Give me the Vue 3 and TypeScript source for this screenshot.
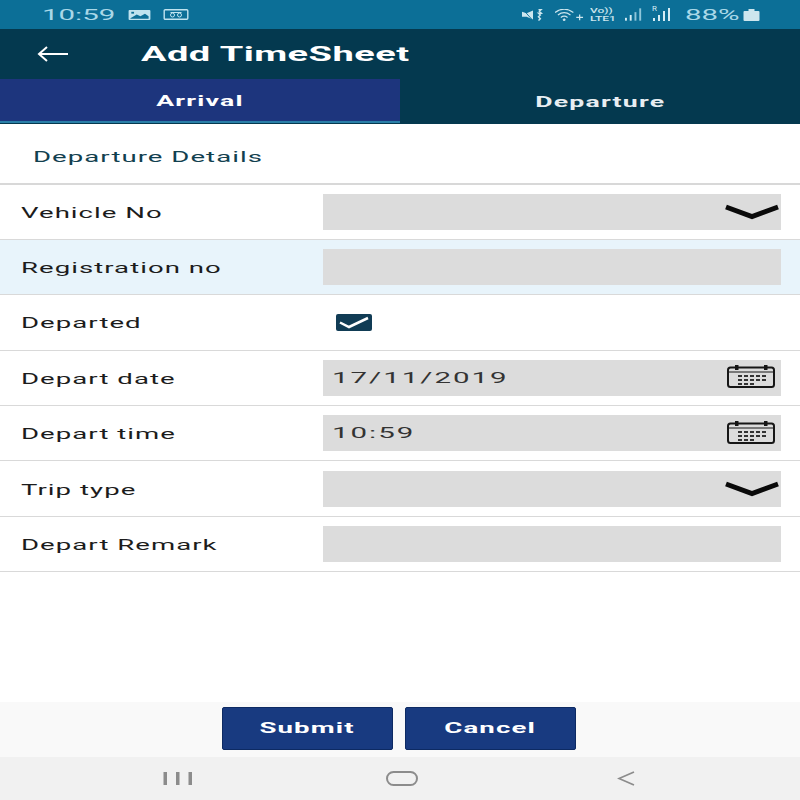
<script setup lang="ts">
interface Row {
  label: string
  value?: string
  kind: 'select' | 'text' | 'check' | 'date'
  tint?: boolean
}
const rows: Row[] = [
  { label: 'Vehicle No', kind: 'select' },
  { label: 'Registration no', kind: 'text', tint: true },
  { label: 'Departed', kind: 'check' },
  { label: 'Depart date', kind: 'date', value: '17/11/2019' },
  { label: 'Depart time', kind: 'date', value: '10:59' },
  { label: 'Trip type', kind: 'select' },
  { label: 'Depart Remark', kind: 'text' },
]
const dots = [
  [11, 10], [17, 10], [23, 10], [29, 10], [35, 10],
  [11, 14], [17, 14], [23, 14], [29, 14], [35, 14],
  [11, 18], [17, 18], [23, 18],
]
</script>

<template>
  <div class="screen">
    <div class="status">
      <div class="status-left">
        <span class="time wide">10:59</span>
        <svg class="ic" width="23" height="10" viewBox="0 0 24 11">
          <rect width="24" height="11" rx="1" fill="#bfe3ef" />
          <path d="M2 9 9 5l4 2 5-3 4 3v2.500H2Z" fill="#0c6f97" />
          <rect x="3" y="2" width="3" height="2" fill="#0c6f97" />
        </svg>
        <svg class="ic" width="26" height="11" viewBox="0 0 25 11" fill="none" stroke="#bfe3ef">
          <rect x="0.700" y="0.700" width="23.600" height="9.600" rx="1" stroke-width="1.400" />
          <circle cx="9" cy="6" r="2" stroke-width="1" />
          <circle cx="16" cy="6" r="2" stroke-width="1" />
          <path d="M7 3.500h11" stroke-width="1" />
        </svg>
      </div>
      <div class="status-right">
        <svg width="22" height="12" viewBox="0 0 24 12" fill="#cde6ee">
          <path d="M0 2.500 5 4 12 1v10L5 8H0Z" />
          <path d="M2 1l9 10" stroke="#0c6f97" stroke-width="1" />
          <path d="M18 0h3l-2 2 2 2h-3l2 2-2 2 2 2-2 2" fill="none" stroke="#cde6ee" stroke-width="1.600" />
        </svg>
        <svg class="wifi" width="29" height="12" viewBox="0 0 30 12" fill="none" stroke="#cde6ee">
          <path d="M0 3.500c6-4.500 13-4.500 19 0M3 6c4-3 9-3 13 0M6 8.500c2-1.500 5-1.500 7 0" stroke-width="1.200" />
          <circle cx="9.500" cy="11" r="1" fill="#cde6ee" />
          <path d="M22 8.500h7M25.500 5.500v6" stroke-width="1.300" />
        </svg>
        <span class="volte"><span class="wide">Vo))</span><span class="wide">LTE1</span></span>
        <svg class="bars" width="19" height="13" viewBox="0 0 20 13" fill="#8fc6da">
          <rect x="0" y="10" width="2" height="3" fill="#d5edf5" />
          <rect x="5" y="7" width="2" height="6" fill="#d5edf5" />
          <rect x="10" y="4" width="2" height="9" />
          <rect x="15" y="0" width="2" height="13" />
        </svg>
        <span class="r-wrap">
          <span class="r">R</span>
          <svg width="22" height="13" viewBox="0 0 20 13" fill="#d5edf5">
            <rect x="0" y="10" width="2" height="3" />
            <rect x="5" y="7" width="2" height="6" />
            <rect x="10" y="3" width="2" height="10" />
            <rect x="15" y="0" width="2" height="13" />
          </svg>
        </span>
        <span class="pct wide">88%</span>
        <svg class="batt" width="17" height="12" viewBox="0 0 16 12" fill="#cde6ee">
          <rect x="0" y="2" width="16" height="10" rx="1" />
          <rect x="5" y="0" width="6" height="2" />
        </svg>
      </div>
    </div>

    <header class="header">
      <svg width="34" height="20" viewBox="0 0 34 20" fill="none" stroke="#fff" stroke-width="2">
        <path d="M3 10h29M11 3 3 10l8 7" />
      </svg>
      <h1 class="title wide">Add TimeSheet</h1>
    </header>

    <nav class="tabs">
      <div class="tab active"><span class="wide">Arrival</span></div>
      <div class="tab"><span class="wide">Departure</span></div>
    </nav>

    <div class="section"><span class="wide">Departure Details</span></div>

    <div v-for="row in rows" :key="row.label" class="row" :class="{ tint: row.tint }">
      <label class="label wide">{{ row.label }}</label>
      <div v-if="row.kind === 'check'" class="check-wrap">
        <svg width="36" height="17" viewBox="0 0 36 17">
          <rect width="36" height="17" rx="2" fill="#113c55" />
          <path d="M4 8.500l9 4.500 19-9" fill="none" stroke="#fff" stroke-width="2.500" />
        </svg>
      </div>
      <div v-else class="field">
        <span class="value wide">{{ row.value }}</span>
        <svg v-if="row.kind === 'select'" class="chev" width="54" height="16" viewBox="0 0 54 16" fill="none" stroke="#0a0a0a" stroke-width="5">
          <path d="M1 3l26 9.500L53 3" />
        </svg>
        <svg v-if="row.kind === 'date'" class="cal" width="48" height="23" viewBox="0 0 48 23">
          <rect x="1" y="2.500" width="46" height="19.500" rx="2.500" fill="none" stroke="#161616" stroke-width="2" />
          <path d="M1 7h46" stroke="#161616" stroke-width="1.200" />
          <rect x="8" y="0" width="3.500" height="5" fill="#161616" />
          <rect x="37" y="0" width="3.500" height="5" fill="#161616" />
          <rect v-for="d in dots" :key="d.join()" :x="d[0]" :y="d[1]" width="4" height="2" fill="#333" />
        </svg>
      </div>
    </div>

    <div class="spacer"></div>

    <div class="actions">
      <button class="btn" type="button"><span class="wide">Submit</span></button>
      <button class="btn" type="button"><span class="wide">Cancel</span></button>
    </div>

    <div class="navbar">
      <svg width="30" height="13" viewBox="0 0 30 13" fill="#8c8c8c">
        <rect x="0.500" y="0" width="3.500" height="13" />
        <rect x="13" y="0" width="3.500" height="13" />
        <rect x="25.500" y="0" width="3.500" height="13" />
      </svg>
      <svg class="home" width="32" height="15" viewBox="0 0 32 15" fill="none" stroke="#8c8c8c" stroke-width="2">
        <rect x="1" y="1" width="30" height="13" rx="6.500" />
      </svg>
      <svg width="18" height="15" viewBox="0 0 18 15" fill="none" stroke="#8c8c8c" stroke-width="1.800">
        <path d="M17 1 2 7.500 17 14" />
      </svg>
    </div>
  </div>
</template>

<style scoped>
.screen {
  width: 800px;
  height: 800px;
  display: flex;
  flex-direction: column;
  background: #fff;
  overflow: hidden;
  font-family: Roboto, "Liberation Sans", sans-serif;
  color: #222;
}
.wide {
  display: inline-block;
  white-space: nowrap;
  letter-spacing: 0.550px;
  transform: scaleX(1.9);
  transform-origin: left center;
}
.status {
  height: 29px;
  flex: none;
  box-sizing: border-box;
  padding: 0 40px 0 42px;
  display: flex;
  align-items: center;
  justify-content: space-between;
  background: #0c6f97;
  color: #a9d8e8;
}
.status-left,
.status-right {
  display: flex;
  align-items: center;
}
.time {
  width: 86px;
  padding-top: 1px;
  font-size: 15.500px;
  letter-spacing: 0;
}
.ic {
  margin-right: 12px;
}
.wifi {
  margin-left: 11px;
}
.volte {
  width: 27px;
  margin-left: 6px;
  display: flex;
  flex-direction: column;
  align-items: flex-start;
  font-size: 8px;
  line-height: 8px;
  color: #cde6ee;
  font-weight: 500;
}
.volte .wide {
  letter-spacing: 0;
  transform: scaleX(1.5);
}
.bars {
  margin-left: 8px;
}
.r-wrap {
  position: relative;
  display: flex;
  margin-left: 8px;
}
.r {
  position: absolute;
  left: 0;
  top: -3px;
  font-size: 8px;
  line-height: 8px;
  color: #d5edf5;
}
.pct {
  width: 52px;
  margin-left: 11px;
  padding-top: 1px;
  font-size: 15.500px;
  letter-spacing: 0;
}
.batt {
  margin-left: 6px;
}
.header {
  height: 50px;
  flex: none;
  box-sizing: border-box;
  padding: 0 0 0 36px;
  display: flex;
  align-items: center;
  background: #04394f;
}
.title {
  margin: 0 0 0 71px;
  font-size: 20px;
  font-weight: 700;
  color: #fff;
  letter-spacing: 0.250px;
}
.tabs {
  height: 45px;
  flex: none;
  display: flex;
  background: #04394f;
  border-bottom: 1px solid #04394f;
  box-sizing: border-box;
}
.tab {
  flex: 1;
  padding-top: 2px;
  display: flex;
  align-items: center;
  justify-content: center;
  color: #e8eef2;
  font-size: 14px;
  font-weight: 700;
}
.tab span {
  letter-spacing: 0.650px;
  transform-origin: center;
}
.tab.active {
  background: #1d357d;
  border-bottom: 2px solid #2a7fa8;
  color: #fff;
}
.section {
  height: 60.500px;
  flex: none;
  box-sizing: border-box;
  padding: 9px 0 0 33px;
  display: flex;
  align-items: center;
  border-bottom: 2px solid #d8d8d8;
  color: #12404f;
  font-size: 14.500px;
}
.row {
  height: 55.400px;
  flex: none;
  box-sizing: border-box;
  padding: 0 19px 0 20.500px;
  display: flex;
  align-items: center;
  border-bottom: 1px solid #d9d9d9;
}
.row.tint {
  background: #e8f4fb;
}
.label {
  width: 302.500px;
  flex: none;
  padding-top: 3px;
  font-size: 14.500px;
  color: #1c1c1c;
}
.check-wrap {
  flex: 1;
  padding-left: 13px;
  display: flex;
  align-items: center;
}
.field {
  flex: 1;
  height: 36px;
  box-sizing: border-box;
  padding: 0 6px 0 9px;
  display: flex;
  align-items: center;
  justify-content: space-between;
  background: #dcdcdc;
}
.value {
  font-size: 15.500px;
  letter-spacing: 1.050px;
  color: #333;
}
.chev {
  margin-left: auto;
  margin-right: -4px;
}
.cal {
  margin-left: auto;
  margin-top: -2px;
}
.spacer {
  flex: 1;
}
.actions {
  height: 55px;
  flex: none;
  box-sizing: border-box;
  padding: 0 2px 2px 0;
  display: flex;
  justify-content: center;
  align-items: center;
  gap: 12px;
  background: #f9f9f9;
}
.btn {
  width: 171px;
  height: 43px;
  border: 1px solid #0d2a63;
  border-radius: 2px;
  background: #183a80;
  color: #fff;
  font-family: Roboto, "Liberation Sans", sans-serif;
  font-size: 14.500px;
  font-weight: 700;
}
.btn span {
  letter-spacing: 0.600px;
  transform-origin: center;
}
.navbar {
  height: 43px;
  flex: none;
  box-sizing: border-box;
  padding: 0 165px 0 163px;
  display: flex;
  align-items: center;
  justify-content: space-between;
  background: #f1f1f1;
}
.home {
  margin-right: 6px;
}
</style>

<style>
html, body { margin: 0; padding: 0; background: #fff; }
</style>
